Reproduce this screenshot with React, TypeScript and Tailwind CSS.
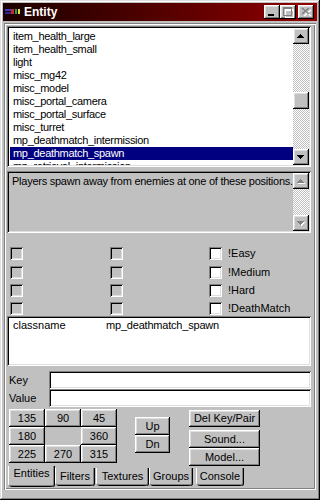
import React from 'react';

const raised = 'shadow-[inset_-1px_-1px_#000,inset_1px_1px_#fff,inset_-2px_-2px_#808080,inset_2px_2px_#dfdfdf]';
const sunken = 'shadow-[inset_1px_1px_#808080,inset_-1px_-1px_#fff,inset_2px_2px_#000,inset_-2px_-2px_#dfdfdf]';
const checker = 'bg-[repeating-conic-gradient(#c0c0c0_0%_25%,#ffffff_0%_50%)] bg-[length:2px_2px]';

const entities = [
  'item_health_large',
  'item_health_small',
  'light',
  'misc_mg42',
  'misc_model',
  'misc_portal_camera',
  'misc_portal_surface',
  'misc_turret',
  'mp_deathmatch_intermission',
  'mp_deathmatch_spawn',
  'mp_retrieval_intermission',
];

const flags = ['!Easy', '!Medium', '!Hard', '!DeathMatch'];

const Arrow = ({ dir, disabled }: { dir: 'up' | 'down'; disabled?: boolean }) => {
  const rows =
    dir === 'up'
      ? [[7, 6, 1], [6, 7, 3], [5, 8, 5], [4, 9, 7]]
      : [[4, 6, 7], [5, 7, 5], [6, 8, 3], [7, 9, 1]];
  return (
    <svg width="16" height="16" viewBox="0 0 16 16" shapeRendering="crispEdges">
      {disabled &&
        rows.map(([x, y, w], i) => (
          <rect key={'s' + i} x={x + 1} y={y + 1} width={w} height={1} fill="#fff" />
        ))}
      {rows.map(([x, y, w], i) => (
        <rect key={i} x={x} y={y} width={w} height={1} fill={disabled ? '#808080' : '#000'} />
      ))}
    </svg>
  );
};

const ScrollBar = ({ disabled }: { disabled?: boolean }) => (
  <div className={`flex w-[16px] shrink-0 flex-col ${checker}`}>
    <div className={`h-[16px] w-[16px] bg-[#c0c0c0] ${raised}`}>
      <Arrow dir="up" disabled={disabled} />
    </div>
    <div className="flex-1">
      {!disabled && <div className={`mt-[48px] h-[17px] w-[16px] bg-[#c0c0c0] ${raised}`} />}
    </div>
    <div className={`h-[16px] w-[16px] bg-[#c0c0c0] ${raised}`}>
      <Arrow dir="down" disabled={disabled} />
    </div>
  </div>
);

const Btn = ({ children, className }: { children?: React.ReactNode; className: string }) => (
  <div className={`flex items-center justify-center bg-[#c0c0c0] leading-none ${raised} ${className}`}>
    {children}
  </div>
);

const Check = ({ disabled }: { disabled?: boolean }) => (
  <div className={`h-[13px] w-[13px] shrink-0 ${sunken} ${disabled ? 'bg-[#c0c0c0]' : 'bg-white'}`} />
);

const Tab = ({ label, active, className }: { label: string; active?: boolean; className: string }) => (
  <div
    className={`flex justify-center rounded-b-[3px] bg-[#c0c0c0] shadow-[inset_1px_0_#fff,inset_-1px_0_#000,inset_-2px_0_#808080,inset_0_-1px_#000,inset_0_-2px_#808080] ${
      active ? 'h-[21px] pt-[1px]' : 'mt-[2px] h-[18px] pt-[2px]'
    } ${className}`}
  >
    <span className="leading-[13px]">{label}</span>
  </div>
);

export default function App() {
  return (
    <div className="h-[500px] w-[320px] select-none bg-[#c0c0c0] p-[3px] font-['Liberation_Sans',Arial,sans-serif] text-[11px] text-black shadow-[inset_-1px_-1px_#000,inset_1px_1px_#dfdfdf,inset_-2px_-2px_#808080,inset_2px_2px_#fff]">
      {/* title bar */}
      <div className="flex h-[18px] items-center bg-linear-to-r from-[#1c0000] to-[#940000] pl-[2px] pr-[3px]">
        <svg width="16" height="16" viewBox="0 0 16 16" shapeRendering="crispEdges">
          <rect x="0" y="5" width="6" height="2" fill="#3c3cc8" />
          <rect x="0" y="8" width="6" height="2" fill="#2a2a90" />
          <rect x="6" y="5" width="3" height="5" fill="#c82828" />
          <rect x="10" y="5" width="2" height="5" fill="#28a848" />
          <rect x="13" y="5" width="2" height="5" fill="#e8e040" />
        </svg>
        <span className="ml-[3px] text-[12px] font-bold leading-none text-white">Entity</span>
        <div className="ml-auto flex items-center">
          <div className={`h-[14px] w-[16px] bg-[#c0c0c0] ${raised}`}>
            <svg width="16" height="14" viewBox="0 0 16 14" shapeRendering="crispEdges">
              <rect x="4" y="9" width="6" height="2" fill="#000" />
            </svg>
          </div>
          <div className={`h-[14px] w-[16px] bg-[#c0c0c0] ${raised}`}>
            <svg width="16" height="14" viewBox="0 0 16 14" shapeRendering="crispEdges">
              <path d="M4 3h9v9h-9z M5 5v6h7v-6z" fill="#fff" fillRule="evenodd" transform="translate(1 1)" />
              <path d="M3 2h9v9h-9z M4 4v6h7v-6z" fill="#808080" fillRule="evenodd" />
            </svg>
          </div>
          <div className={`ml-[2px] h-[14px] w-[16px] bg-[#c0c0c0] ${raised}`}>
            <svg width="16" height="14" viewBox="0 0 16 14">
              <path d="M5 4l7 6M12 4l-7 6" stroke="#fff" strokeWidth="1.6" transform="translate(1 1)" />
              <path d="M4 3l7 6M11 3l-7 6" stroke="#808080" strokeWidth="1.6" />
            </svg>
          </div>
        </div>
      </div>

      {/* client frame */}
      <div className="ml-[1px] mt-[2px] flex h-[467px] w-[312px] flex-col pl-[3px] pt-[3px] shadow-[inset_1px_1px_#808080,inset_2px_2px_#fff,inset_-1px_-1px_#fff,inset_-2px_-2px_#808080]">
        {/* entity class list */}
        <div className={`flex h-[141px] w-[304px] bg-white p-[2px] ${sunken}`}>
          <div className="flex-1 overflow-hidden pl-[1px] pt-[2px]">
            {entities.map((e) => (
              <div
                key={e}
                className={`h-[13px] pl-[3px] leading-[13px] tracking-[-0.3px] ${
                  e === 'mp_deathmatch_spawn' ? 'bg-[#000080] text-white' : ''
                }`}
              >
                {e}
              </div>
            ))}
          </div>
          <ScrollBar />
        </div>

        {/* description */}
        <div className={`mt-[4px] flex h-[62px] w-[304px] bg-[#c0c0c0] p-[2px] ${sunken}`}>
          <div className="flex-1 overflow-hidden pl-[3px] pt-[2px] leading-[13px] tracking-[-0.25px]">
            Players spawn away from enemies at one of these positions.
          </div>
          <ScrollBar disabled />
        </div>

        {/* spawnflags */}
        <div className="mt-[14px] flex flex-col">
          {flags.map((f, i) => (
            <div
              key={f}
              className={`flex items-start ${i === 0 ? 'h-[19px]' : i === 3 ? 'h-[13px]' : 'h-[18px]'}`}
            >
              <div className="ml-[3px] w-[100px]">
                <Check disabled />
              </div>
              <div className="w-[99px]">
                <Check disabled />
              </div>
              <Check />
              <span className="ml-[6px] leading-[13px]">{f}</span>
            </div>
          ))}
        </div>

        {/* key / value list */}
        <div className={`mt-[1px] h-[50px] w-[304px] bg-white pl-[6px] pt-[3px] ${sunken}`}>
          <div className="flex leading-[13px]">
            <span className="w-[93px]">classname</span>
            <span className="tracking-[-0.2px]">mp_deathmatch_spawn</span>
          </div>
        </div>

        {/* key / value edits */}
        <div className="mt-[5px] flex h-[18px] w-[304px] items-center">
          <span className="w-[42px] pl-[2px]">Key</span>
          <div className={`h-[18px] flex-1 bg-white ${sunken}`} />
        </div>
        <div className="flex h-[18px] w-[304px] items-center">
          <span className="w-[42px] pl-[2px]">Value</span>
          <div className={`h-[18px] flex-1 bg-white ${sunken}`} />
        </div>

        {/* buttons */}
        <div className="mt-[2px] flex h-[57px]">
          <div className="ml-[2px] grid h-[54px] grid-cols-[36px_36px_36px] grid-rows-[18px_18px_18px]">
            <Btn className="">135</Btn>
            <Btn className="">90</Btn>
            <Btn className="">45</Btn>
            <Btn className="">180</Btn>
            <div />
            <Btn className="">360</Btn>
            <Btn className="">225</Btn>
            <Btn className="">270</Btn>
            <Btn className="">315</Btn>
          </div>
          <div className="ml-[18px] mt-[8px] flex w-[35px] flex-col">
            <Btn className="h-[18px]">Up</Btn>
            <Btn className="h-[18px]">Dn</Btn>
          </div>
          <div className="ml-[19px] flex w-[71px] flex-col">
            <Btn className="mt-[1px] h-[17px]">Del Key/Pair</Btn>
            <Btn className="mt-[3px] h-[18px]">Sound...</Btn>
            <Btn className="h-[18px]">Model...</Btn>
          </div>
        </div>

        {/* tabs */}
        <div className="ml-[1px] flex h-[21px] items-start">
          <Tab label="Entities" active className="w-[47px]" />
          <Tab label="Filters" className="w-[40px]" />
          <Tab label="Textures" className="ml-[1px] w-[53px]" />
          <Tab label="Groups" className="w-[44px]" />
          <Tab label="Console" className="ml-[3px] w-[48px]" />
        </div>
      </div>
    </div>
  );
}
